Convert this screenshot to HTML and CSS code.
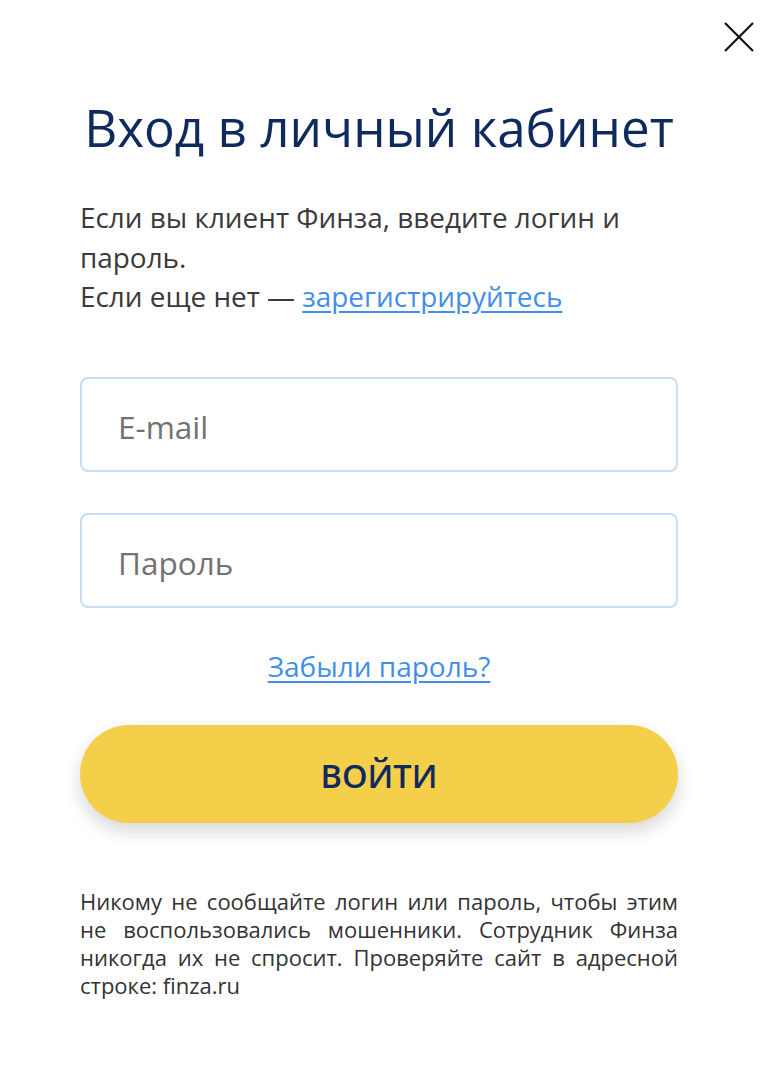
FILE: index.html
```html
<!DOCTYPE html>
<html lang="ru">
<head>
    <meta charset="UTF-8">
    <meta name="viewport" content="width=device-width, initial-scale=1.0">
    <title>Вход в личный кабинет</title>
    <link rel="stylesheet" href="styles.css">
</head>
<body>
    <div class="modal">
        <!-- Кнопка закрытия -->
        <button class="close-btn" type="button" aria-label="Закрыть">
            <svg width="32" height="32" viewBox="0 0 32 32">
                <path d="M2 2 L30 30 M30 2 L2 30" stroke="#111" stroke-width="2.2" fill="none"/>
            </svg>
        </button>

        <h1>Вход в личный кабинет</h1>

        <p class="intro">
            Если вы клиент Финза, введите логин и пароль.<br>
            Если еще нет — <a href="#">зарегистрируйтесь</a>
        </p>

        <form class="login-form" onsubmit="event.preventDefault();">
            <input type="text" class="field" placeholder="E-mail">
            <input type="password" class="field" placeholder="Пароль">
            <a href="#" class="forgot">Забыли пароль?</a>
            <button type="submit" class="submit-btn">ВОЙТИ</button>
        </form>

        <p class="warning">
            Никому не сообщайте логин или пароль, чтобы этим не воспользовались мошенники. Сотрудник Финза никогда их не спросит. Проверяйте сайт в адресной строке: finza.ru
        </p>
    </div>
</body>
</html>
```

FILE: styles.css
```css
* {
    margin: 0;
    padding: 0;
    box-sizing: border-box;
}

body {
    font-family: 'Open Sans', 'Noto Sans', sans-serif;
    background-color: #ffffff;
    color: #333;
}

/* Окно входа */
.modal {
    position: relative;
    width: 768px;
    min-height: 1088px;
    padding: 94px 90px 0 80px;
}

.close-btn {
    position: absolute;
    top: 21px;
    right: 13px;
    width: 32px;
    height: 32px;
    background: none;
    border: none;
    cursor: pointer;
}

.close-btn svg {
    display: block;
}

h1 {
    color: #0e2a5e;
    font-size: 51.2px;
    font-weight: 400;
    line-height: 66px;
    text-align: center;
}

.intro {
    margin-top: 38px;
    font-size: 27.9px;
    line-height: 39.5px;
    color: #3a3a3a;
}

.intro a,
.forgot {
    color: #3f8fe8;
    text-decoration: underline;
    text-underline-offset: 4px;
}

/* Форма */
.login-form {
    display: flex;
    flex-direction: column;
    margin-top: 60px;
}

.field {
    height: 95px;
    padding: 4px 36px 0;
    border: 2px solid #c6ddf6;
    border-radius: 8px;
    font-family: inherit;
    font-size: 31.5px;
    color: #333;
    outline: none;
}

.field + .field {
    margin-top: 41px;
}

.field::placeholder {
    color: #727272;
}

.forgot {
    align-self: center;
    margin-top: 38px;
    font-size: 28px;
    line-height: 40px;
}

.submit-btn {
    margin-top: 39px;
    height: 98px;
    padding-top: 4px;
    background-color: #f6cf4a;
    border: none;
    border-radius: 49px;
    box-shadow: 0 8px 18px rgba(0, 0, 0, 0.16);
    font-family: inherit;
    font-size: 32.5px;
    font-weight: 600;
    color: #0e2a5e;
    cursor: pointer;
}

/* Предупреждение */
.warning {
    margin-top: 64px;
    font-size: 22px;
    line-height: 28.3px;
    text-align: justify;
    color: #333;
}
```
